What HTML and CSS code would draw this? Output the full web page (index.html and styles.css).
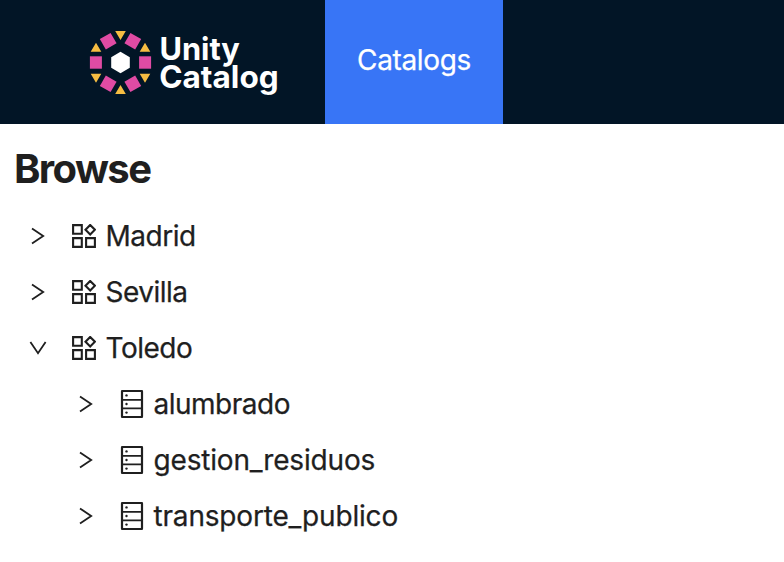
FILE: index.html
```html
<!DOCTYPE html>
<html lang="en">
<head>
<meta charset="utf-8">
<title>Unity Catalog</title>
<link rel="stylesheet" href="styles.css">
</head>
<body>
<svg class="defs" aria-hidden="true">
  <symbol id="chevron" viewBox="0 0 16 18"><path d="M2 1.4 13.2 9 2 16.6" fill="none" stroke="currentColor" stroke-width="1.8"/></symbol>
  <symbol id="catalog" viewBox="0 0 24 24"><path d="M1.1 1.1h8.7v8.7H1.1zM1.1 14.1h8.7v8.8H1.1zM14.1 14.1h8.8v8.8h-8.8zM18.2.9l4.7 4.8-4.7 4.8-4.7-4.8z" fill="none" stroke="currentColor" stroke-width="2.1"/></symbol>
  <symbol id="schema" viewBox="0 0 22 28"><rect x="1" y="1" width="20" height="26" rx=".4" fill="none" stroke="currentColor" stroke-width="2.2"/><path d="M2 9.8h18M2 18.4h18" stroke="currentColor" stroke-width="1.8"/><g fill="currentColor"><circle cx="5.5" cy="5.4" r="1.2"/><circle cx="5.5" cy="14" r="1.2"/><circle cx="5.5" cy="22.6" r="1.2"/></g></symbol>
</svg>
<header class="header">
  <svg class="logo" viewBox="0 0 192 72" role="img" aria-label="Unity Catalog">
    <g transform="translate(32.5 34.5)">
      <g fill="#e04ba4">
        <rect x="18.6" y="-6.2" width="12" height="12.4"/>
        <rect x="18.6" y="-6.2" width="12" height="12.4" transform="rotate(60)"/>
        <rect x="18.6" y="-6.2" width="12" height="12.4" transform="rotate(120)"/>
        <rect x="18.6" y="-6.2" width="12" height="12.4" transform="rotate(180)"/>
        <rect x="18.6" y="-6.2" width="12" height="12.4" transform="rotate(240)"/>
        <rect x="18.6" y="-6.2" width="12" height="12.4" transform="rotate(300)"/>
      </g>
      <path fill="#f6bd42" d="M-5.3-31.5H5.3L0-22.5zM-5.3 31.5H5.3L0 22.5zM-29.8-10.8h10.6l-5.3-9zM19.2-10.8h10.6l-5.3-9zM-29.8 11.2h10.6l-5.3 9zM19.2 11.2h10.6l-5.3 9z"/>
      <path fill="#fff" d="M0-10.7 9.3-5.3V5.3L0 10.7-9.3 5.3V-5.3z"/>
    </g>
    <g class="wordmark">
      <text x="71.4" y="31.6" textLength="80.5" lengthAdjust="spacingAndGlyphs">Unity</text>
      <text x="71.2" y="60" textLength="119.5" lengthAdjust="spacingAndGlyphs">Catalog</text>
    </g>
  </svg>
  <nav class="nav"><a class="tab">Catalogs</a></nav>
</header>
<main class="browser">
  <h1 class="title">Browse</h1>
  <ul class="tree">
    <li class="row"><svg class="chevron"><use href="#chevron"/></svg><svg class="catalog"><use href="#catalog"/></svg><span class="label">Madrid</span></li>
    <li class="row"><svg class="chevron"><use href="#chevron"/></svg><svg class="catalog"><use href="#catalog"/></svg><span class="label">Sevilla</span></li>
    <li class="row"><svg class="chevron open"><use href="#chevron"/></svg><svg class="catalog"><use href="#catalog"/></svg><span class="label">Toledo</span></li>
    <li class="row child"><svg class="chevron"><use href="#chevron"/></svg><svg class="schema"><use href="#schema"/></svg><span class="label">alumbrado</span></li>
    <li class="row child"><svg class="chevron"><use href="#chevron"/></svg><svg class="schema"><use href="#schema"/></svg><span class="label wide">gestion_residuos</span></li>
    <li class="row child"><svg class="chevron"><use href="#chevron"/></svg><svg class="schema"><use href="#schema"/></svg><span class="label wide">transporte_publico</span></li>
  </ul>
</main>
</body>
</html>
```
FILE: styles.css
```css
* { box-sizing: border-box; }
body { margin: 0; background: #fff; color: #1f1f1f; font-family: Inter, "Liberation Sans", sans-serif; font-size: 28px; }
.defs { display: none; }
.header { display: flex; height: 124px; padding-left: 88px; background: #021526; }
.logo { width: 192px; height: 72px; margin: 28px 45px 0 0; }
.wordmark { fill: #fff; font-family: Inter, sans-serif; font-size: 31.5px; font-weight: 650; }
.nav { display: flex; }
.tab { width: 178px; padding-top: 40px; background: #3875f6; color: #fff; line-height: 40px; text-align: center; letter-spacing: -.35px; -webkit-text-stroke: .25px; }
.browser { padding: 20px 0 0 14px; }
.title { margin: 0; font-size: 40px; line-height: 50px; font-weight: 650; letter-spacing: -1.6px; }
.tree { list-style: none; margin: 14px 0 0; padding: 0; }
.row { display: flex; align-items: center; height: 56px; padding-left: 16px; line-height: 40px; }
.child { padding-left: 64px; }
.chevron { width: 16px; height: 18px; margin-right: 26px; }
.open { transform: rotate(90deg); }
.catalog { width: 24px; height: 24px; margin-right: 9.5px; }
.schema { width: 24px; height: 28px; margin-right: 9.5px; }
.label { letter-spacing: -.5px; white-space: nowrap; -webkit-text-stroke: .25px; }
.wide { letter-spacing: -.18px; }
```
